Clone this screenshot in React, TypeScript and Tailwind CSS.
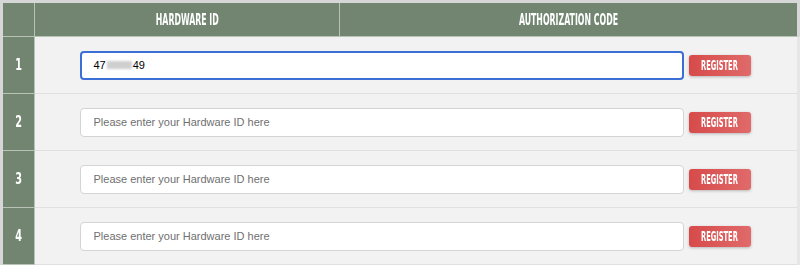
// Таблица регистрации Hardware ID
import React from 'react';

const rows = [1, 2, 3, 4];

const cond = { fontFamily: '"DejaVu Sans Condensed", "DejaVu Sans", sans-serif' };
const arial = { fontFamily: '"Liberation Sans", Arial, sans-serif' };

// Узкий шрифт заголовков (сжатие по горизонтали)
function Narrow({ children, className = 'scale-x-[0.58]' }: { children: React.ReactNode; className?: string }) {
  return (
    <span className={'inline-block origin-center font-bold whitespace-nowrap ' + className} style={cond}>
      {children}
    </span>
  );
}

export default function App() {
  return (
    <div className="w-[800px] h-[268px] bg-white">
      <table className="w-full border-collapse border-[3px] border-[#d6d6d6] border-b-0 border-r-0">
        <thead>
          <tr className="h-[35px] bg-[#718570] text-white">
            <th className="w-[33px] border border-[#b9c2b7] border-t-[#d6d6d6]"></th>
            <th className="w-[305px] border border-[#b9c2b7] text-[15px]">
              <Narrow>HARDWARE ID</Narrow>
            </th>
            <th className="border border-[#b9c2b7] border-r-[3px] border-r-[#d6d6d6] text-[15px]">
              <Narrow>AUTHORIZATION CODE</Narrow>
            </th>
          </tr>
        </thead>
        <tbody>
          {rows.map((n) => (
            <tr key={n} className="h-[57px] bg-[#f2f2f2]">
              <td className="bg-[#718570] text-white text-center text-[15px] border border-[#b9c2b7]">
                <Narrow className="scale-x-[0.72]">{n}</Narrow>
              </td>
              <td colSpan={2} className="border-b border-[#e0e0e0] border-r-[3px] border-r-[#e6e6e6]">
                <div className="flex items-center justify-center gap-[5px] pr-[2px]">
                  {n === 1 ? (
                    // Поле в фокусе с частично скрытым значением
                    <div
                      className="w-[604px] h-[29px] rounded-[4px] bg-white border-2 border-[#3b6fd6] px-[12px] flex items-center text-[11px] text-black"
                      style={arial}
                    >
                      47
                      <span className="inline-block w-[25px] h-[8px] bg-[#cfcfcf] blur-[1px] mx-[1px]" />
                      49
                    </div>
                  ) : (
                    <input
                      type="text"
                      placeholder="Please enter your Hardware ID here"
                      className="w-[604px] h-[29px] rounded-[4px] bg-white px-[13px] text-[11px] text-black placeholder:text-[#6f6f6f] outline-none border border-[#d4d4d4]"
                      style={arial}
                    />
                  )}
                  <button className="w-[62px] h-[21px] rounded-[3px] bg-gradient-to-r from-[#d74a4a] to-[#e06a6a] text-white text-[13.5px] shadow-[0_1px_3px_rgba(0,0,0,0.25)] flex items-center justify-center">
                    <Narrow className="scale-x-[0.55]">REGISTER</Narrow>
                  </button>
                </div>
              </td>
            </tr>
          ))}
        </tbody>
      </table>
    </div>
  );
}
